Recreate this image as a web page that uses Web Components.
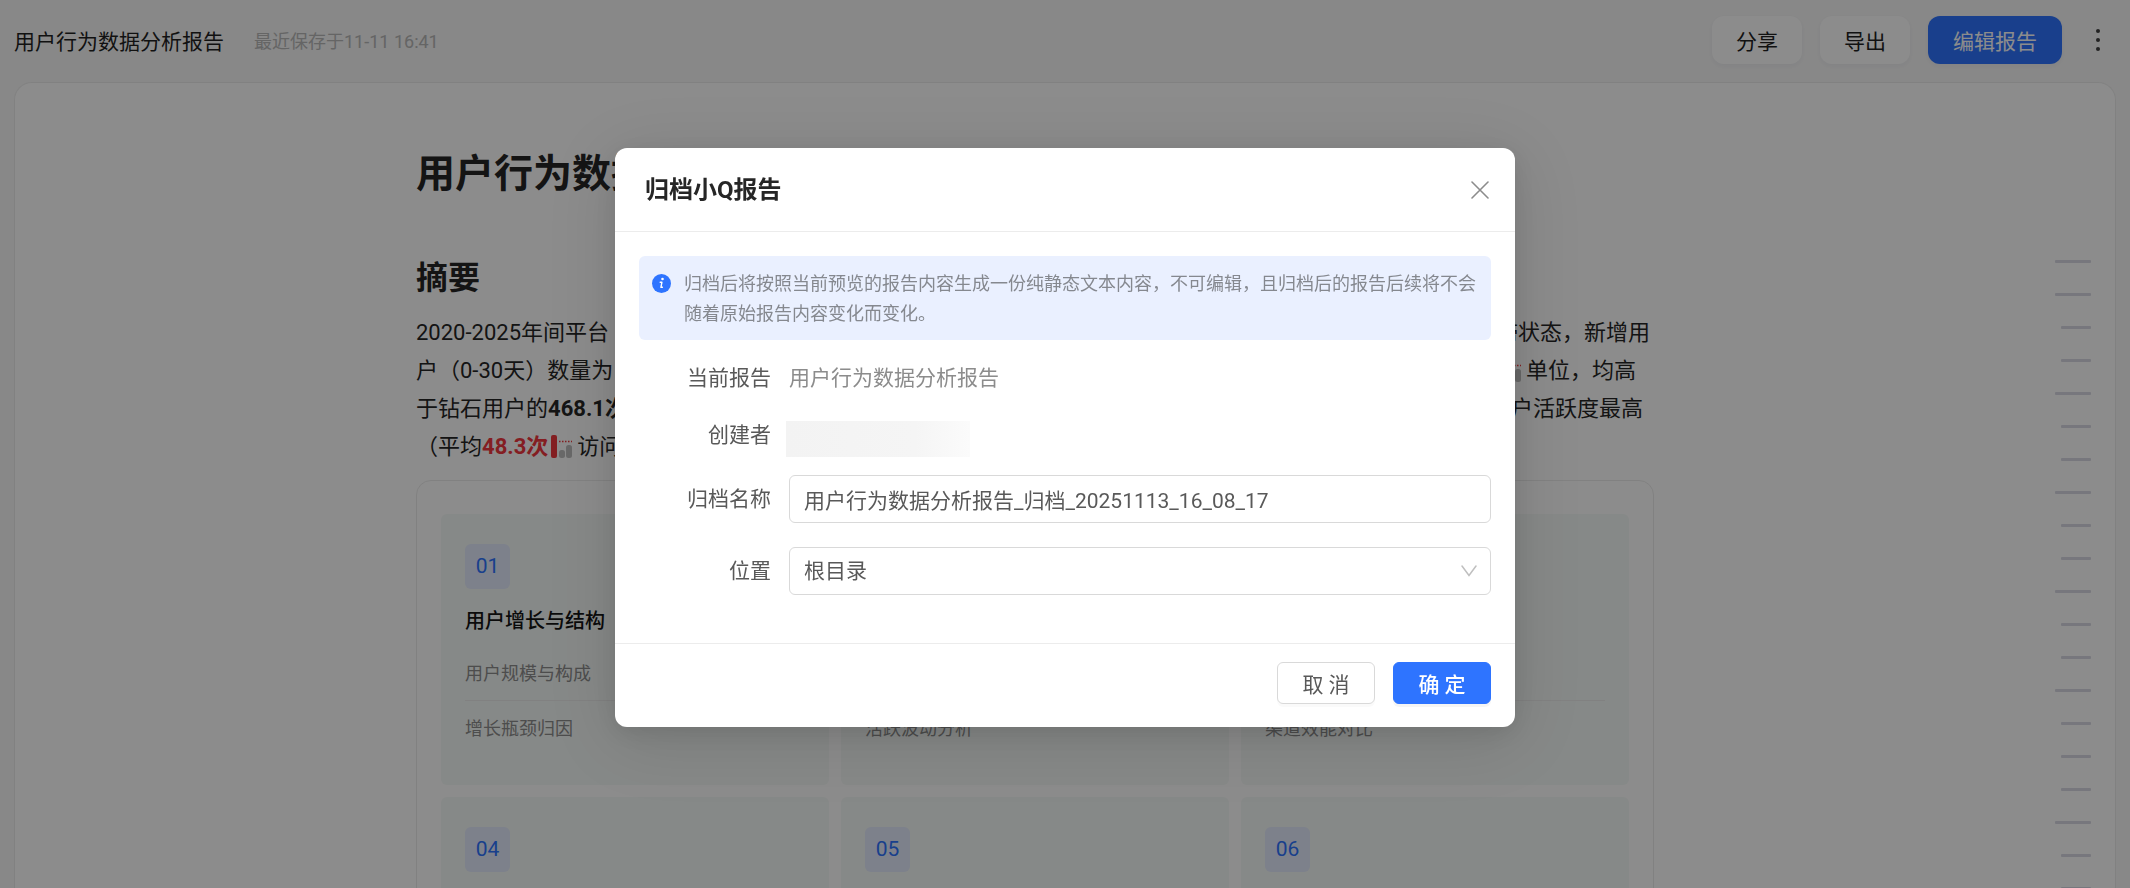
<!DOCTYPE html>
<html lang="zh-CN">
<head>
<meta charset="utf-8">
<title>用户行为数据分析报告</title>
<style>
    html, body {
        margin: 0;
        height: 100%;
    }
    body {
        overflow: hidden;
        font-family: Roboto, "Noto Sans CJK SC", sans-serif;
        font-size: 21px;
        color: #262626;
        --primary: #2e74ff;
        --line: #ececec;
    }
</style>
</head>
<body>
<report-page></report-page>
<archive-dialog></archive-dialog>

<script>
function createTemplate(html) {
    const template = document.createElement("template")
    template.innerHTML = html
    return template
}

class BaseElement extends HTMLElement {
    constructor() {
        super()
        this.attachShadow({ mode: "open" })
        this.shadowRoot.appendChild(this.constructor.template.content.cloneNode(true))
    }
}

class BarIcon extends BaseElement {
    static template = createTemplate(`
        <style>
        :host {
            display: inline-block;
            width: 22px;
            height: 24px;
            margin: 0 4px 0 3px;
            vertical-align: -4px;
        }
        svg {
            display: block;
        }
        </style>
        <svg width="22" height="24" viewBox="0 0 22 24">
            <rect x="0" y="1" width="6" height="23" rx="2" fill="#f0383e"/>
            <path d="M8 7.500h13" stroke="#f0383e" stroke-width="1.500" stroke-dasharray="1.500 1.500"/>
            <rect x="8" y="16" width="6" height="8" rx="2.500" fill="#bfbfbf"/>
            <rect x="15" y="11" width="6" height="13" rx="2.500" fill="#bfbfbf"/>
        </svg>
    `)
}
window.customElements.define("bar-icon", BarIcon)

class TopBar extends BaseElement {
    static template = createTemplate(`
        <style>
        :host {
            display: flex;
            align-items: center;
            justify-content: space-between;
            padding: 16px 20px 18px 14px;
        }
        .info, .actions {
            display: flex;
            align-items: center;
        }
        .info {
            gap: 30px;
        }
        .name {
            color: #1f1f1f;
        }
        .saved {
            font-size: 18px;
            color: #b8b8b8;
        }
        .actions {
            gap: 18px;
        }
        button {
            height: 48px;
            padding: 0 24px;
            border: 0;
            border-radius: 12px;
            background: #fff;
            color: #1f1f1f;
            font: inherit;
            box-shadow: 0 2px 4px rgba(30, 60, 120, 0.04);
        }
        .primary {
            padding: 0 25px;
            background: var(--primary);
            color: #fff;
        }
        .more {
            height: 36px;
            padding: 0 6px;
            margin-left: 6px;
            background: none;
            box-shadow: none;
        }
        svg {
            display: block;
        }
        </style>
        <div class="info">
            <span class="name">用户行为数据分析报告</span>
            <span class="saved">最近保存于11-11 16:41</span>
        </div>
        <div class="actions">
            <button>分享</button>
            <button>导出</button>
            <button class="primary">编辑报告</button>
            <button class="more" aria-label="更多">
                <svg width="12" height="24" viewBox="0 0 12 24" fill="#404040">
                    <circle cx="6" cy="3" r="2"/>
                    <circle cx="6" cy="12" r="2"/>
                    <circle cx="6" cy="21" r="2"/>
                </svg>
            </button>
        </div>
    `)
}
window.customElements.define("top-bar", TopBar)

class TopicTile extends BaseElement {
    static template = createTemplate(`
        <style>
        :host {
            display: flex;
            flex-direction: column;
            align-items: flex-start;
            padding: 30px 24px;
            border-radius: 6px;
            background: #f5f9f7;
        }
        ::slotted([slot="number"]) {
            width: 45px;
            border-radius: 6px;
            background: #e3ebfd;
            color: var(--primary);
            line-height: 45px;
            text-align: center;
        }
        ::slotted(h3) {
            margin: 18px 0 11px;
            font-size: 20px;
            font-weight: 500;
            line-height: 28px;
            color: #141414;
        }
        ul {
            align-self: stretch;
            margin: auto 0 0;
            padding: 0;
            list-style: none;
            font-size: 18px;
            line-height: 28px;
            color: #8c8c8c;
        }
        ::slotted(li) {
            padding: 14px 0 12px;
        }
        ::slotted(li.divided) {
            border-top: 1px solid var(--line);
        }
        </style>
        <slot name="number"></slot>
        <slot name="title"></slot>
        <ul><slot></slot></ul>
    `)
}
window.customElements.define("topic-tile", TopicTile)

class ReportArticle extends BaseElement {
    static template = createTemplate(`
        <style>
        :host {
            display: block;
            color: #262626;
        }
        h1, h2 {
            margin: 0;
            font-weight: 700;
        }
        h1 {
            font-size: 39px;
            line-height: 56px;
        }
        h2 {
            margin: 54px 0 14px;
            font-size: 32px;
            line-height: 44px;
        }
        p {
            margin: 0;
            font-size: 22px;
            line-height: 38px;
        }
        .row {
            display: flex;
            justify-content: space-between;
            padding-right: 4px;
        }
        .row.mid {
            padding-right: 11px;
        }
        .row.short {
            padding-right: 18px;
        }
        .down {
            color: #f0383e;
        }
        .tiles {
            display: grid;
            grid-template-columns: repeat(3, 1fr);
            grid-auto-rows: 1fr;
            gap: 12px;
            margin-top: 14px;
            padding: 33px 24px;
            border: 1px solid var(--line);
            border-radius: 15px;
        }
        </style>
        <h1>用户行为数据</h1>
        <h2>摘要</h2>
        <p>
            <span class="row"><span>2020-2025年间平台</span><span>滞状态，新增用</span></span>
            <span class="row short"><span>户（0-30天）数量为</span><span><bar-icon></bar-icon>单位，均高</span></span>
            <span class="row mid"><span>于钻石用户的<b>468.1次</b></span><span>户活跃度最高</span></span>
            <span class="row"><span>（平均<b class="down">48.3次</b><bar-icon></bar-icon>访问</span></span>
        </p>
        <div class="tiles">
            <topic-tile>
                <span slot="number">01</span>
                <h3 slot="title">用户增长与结构</h3>
                <li>用户规模与构成</li>
                <li class="divided">增长瓶颈归因</li>
            </topic-tile>
            <topic-tile><li class="divided">活跃波动分析</li></topic-tile>
            <topic-tile><li class="divided">渠道效能对比</li></topic-tile>
            <topic-tile><span slot="number">04</span></topic-tile>
            <topic-tile><span slot="number">05</span></topic-tile>
            <topic-tile><span slot="number">06</span></topic-tile>
        </div>
    `)
}
window.customElements.define("report-article", ReportArticle)

class OutlineRail extends BaseElement {
    static template = createTemplate(`
        <style>
        :host {
            display: flex;
            flex-direction: column;
            align-items: flex-end;
            gap: 30px;
        }
        i {
            flex: none;
            width: 30px;
            height: 3px;
            border-radius: 1px;
            background: #d9d9e3;
        }
        i.major {
            width: 36px;
        }
        </style>
    `)

    connectedCallback() {
        // 1 = section heading, 0 = sub heading
        const levels = this.getAttribute("levels")
        for (const level of levels) {
            const mark = document.createElement("i")
            if (level == "1") mark.className = "major"
            this.shadowRoot.appendChild(mark)
        }
    }
}
window.customElements.define("outline-rail", OutlineRail)

class ReportPage extends BaseElement {
    static template = createTemplate(`
        <style>
        :host {
            display: flex;
            flex-direction: column;
            height: 100vh;
            background: #f7f7f7;
        }
        main {
            flex: 1;
            min-height: 0;
            overflow: hidden;
            display: grid;
            grid-template-columns: 1fr minmax(0, 1238px) 1fr 36px;
            margin: 0 14px;
            padding: 63px 24px 0 0;
            border: 1px solid var(--line);
            border-bottom: 0;
            border-radius: 18px 18px 0 0;
            background: #fff;
        }
        report-article {
            grid-column: 2;
        }
        outline-rail {
            grid-column: 4;
            padding-top: 114px;
        }
        </style>
        <top-bar></top-bar>
        <main>
            <report-article></report-article>
            <outline-rail levels="11001001001001000100"></outline-rail>
        </main>
    `)
}
window.customElements.define("report-page", ReportPage)

class FormRow extends BaseElement {
    static template = createTemplate(`
        <style>
        :host {
            display: grid;
            grid-template-columns: 132px minmax(0, 1fr);
            column-gap: 18px;
            align-items: center;
            min-height: 48px;
            line-height: 28px;
        }
        ::slotted([slot="label"]) {
            text-align: right;
            color: #595959;
        }
        </style>
        <slot name="label"></slot>
        <slot></slot>
    `)
}
window.customElements.define("form-row", FormRow)

class ArchiveDialog extends BaseElement {
    static template = createTemplate(`
        <style>
        :host {
            position: fixed;
            inset: 0;
            display: flex;
            align-items: flex-start;
            justify-content: center;
            padding-top: 148px;
            background: rgba(0, 0, 0, 0.45);
        }
        section {
            width: 900px;
            max-width: 100%;
            border-radius: 12px;
            background: #fff;
            box-shadow: 0 12px 72px 12px rgba(0, 0, 0, 0.1), 0 6px 24px rgba(0, 0, 0, 0.1);
        }
        header {
            display: flex;
            align-items: center;
            justify-content: space-between;
            padding: 24px 26px 23px 30px;
            border-bottom: 1px solid var(--line);
        }
        h2 {
            margin: 0;
            font-size: 24px;
            font-weight: 700;
            line-height: 36px;
        }
        .close {
            padding: 0;
            border: 0;
            background: none;
        }
        svg {
            display: block;
        }
        .body {
            padding: 24px 24px 48px;
        }
        .notice {
            display: flex;
            gap: 13px;
            padding: 13px 15px 11px 13px;
            margin-bottom: 14px;
            border-radius: 6px;
            background: #eaf0ff;
            color: #85888f;
            font-size: 18px;
            line-height: 30px;
        }
        .notice svg {
            flex: none;
            margin-top: 5px;
        }
        .notice p {
            margin: 0;
        }
        .value {
            color: #8c8c8c;
        }
        .masked {
            width: 184px;
            height: 36px;
            margin-left: -3px;
            background: linear-gradient(90deg, #f3f3f3, #f5f5f5 70%, #fbfbfb);
        }
        form-row.creator {
            align-items: start;
            min-height: 54px;
            margin-top: 19px;
        }
        form-row + form-row.field {
            margin-top: 24px;
        }
        form-row.creator + form-row.field {
            margin-top: 0;
        }
        input, select {
            box-sizing: border-box;
            width: 100%;
            height: 48px;
            padding: 0 14px;
            border: 1px solid #d9d9d9;
            border-radius: 6px;
            background: #fff;
            color: #595959;
            font: inherit;
            appearance: none;
        }
        .select {
            display: grid;
            align-items: center;
        }
        .select > * {
            grid-area: 1 / 1;
        }
        .select svg {
            justify-self: end;
            margin-right: 14px;
            pointer-events: none;
        }
        footer {
            display: flex;
            justify-content: flex-end;
            gap: 18px;
            padding: 18px 24px 23px;
            border-top: 1px solid var(--line);
        }
        footer button {
            width: 98px;
            height: 42px;
            padding: 0;
            border: 1px solid #d9d9d9;
            border-radius: 6px;
            background: #fff;
            color: #595959;
            font: inherit;
            box-shadow: 0 3px 0 rgba(0, 0, 0, 0.02);
        }
        footer .ok {
            border-color: var(--primary);
            background: var(--primary);
            color: #fff;
            font-weight: 500;
            box-shadow: 0 3px 0 rgba(0, 0, 0, 0.04);
        }
        </style>
        <section role="dialog" aria-labelledby="heading">
            <header>
                <h2 id="heading">归档小Q报告</h2>
                <button class="close" aria-label="关闭">
                    <svg width="18" height="18" viewBox="0 0 18 18" fill="none" stroke="#8c8c8c" stroke-width="1.600" stroke-linecap="round">
                        <path d="M1 1l16 16M17 1L1 17"/>
                    </svg>
                </button>
            </header>
            <div class="body">
                <div class="notice">
                    <svg width="19" height="19" viewBox="0 0 19 19">
                        <circle cx="9.500" cy="9.500" r="9.500" fill="#2e74ff"/>
                        <circle cx="10.500" cy="5" r="1.300" fill="#fff"/>
                        <path d="M8.200 8.300h1.700L8.900 13.300h1.500" fill="none" stroke="#fff" stroke-width="1.400" stroke-linecap="round" stroke-linejoin="round"/>
                    </svg>
                    <p>归档后将按照当前预览的报告内容生成一份纯静态文本内容，不可编辑，且归档后的报告后续将不会随着原始报告内容变化而变化。</p>
                </div>
                <form-row>
                    <span slot="label">当前报告</span>
                    <span class="value">用户行为数据分析报告</span>
                </form-row>
                <form-row class="creator">
                    <span slot="label">创建者</span>
                    <div class="masked"></div>
                </form-row>
                <form-row class="field">
                    <label slot="label" for="name">归档名称</label>
                    <input id="name" type="text" value="用户行为数据分析报告_归档_20251113_16_08_17">
                </form-row>
                <form-row class="field">
                    <label slot="label" for="folder">位置</label>
                    <div class="select">
                        <select id="folder"><option>根目录</option></select>
                        <svg width="16" height="12" viewBox="0 0 16 12" fill="none" stroke="#bfbfbf" stroke-width="1.500" stroke-linecap="round">
                            <path d="M1 1l7 9.500L15 1"/>
                        </svg>
                    </div>
                </form-row>
            </div>
            <footer>
                <button>取 消</button>
                <button class="ok">确 定</button>
            </footer>
        </section>
    `)

    constructor() {
        super()
        this.close = this.close.bind(this)
    }

    close() {
        this.remove()
    }

    connectedCallback() {
        this.shadowRoot.querySelectorAll("button").forEach(button => {
            button.addEventListener("click", this.close)
        })
    }
}
window.customElements.define("archive-dialog", ArchiveDialog)
</script>
</body>
</html>
